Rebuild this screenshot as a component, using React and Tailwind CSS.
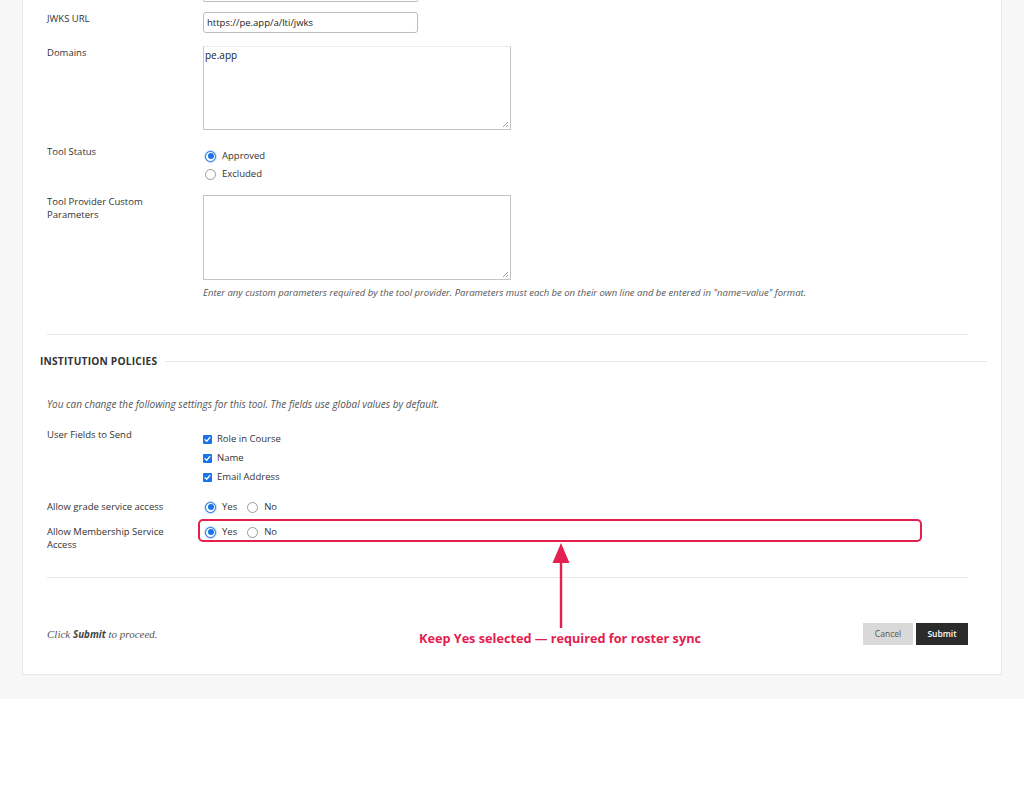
import React from 'react';

const Radio = ({ checked, label }) => (
  <label className="flex items-center gap-[6px] h-[18px]">
    {checked ? (
      <span className="w-[11px] h-[11px] rounded-full border border-[#1a73e8] bg-white flex items-center justify-center shadow-[0_0_0_1px_rgba(26,115,232,0.25)]">
        <span className="w-[6px] h-[6px] rounded-full bg-[#1a73e8]" />
      </span>
    ) : (
      <span className="w-[11px] h-[11px] rounded-full border border-[#999] bg-white" />
    )}
    <span>{label}</span>
  </label>
);

const Check = ({ label }) => (
  <label className="flex items-center gap-[5px] h-[19px]">
    <span className="w-[9px] h-[9px] rounded-[1px] bg-[#1a73e8] flex items-center justify-center">
      <svg width="7" height="7" viewBox="0 0 8 8" fill="none">
        <path d="M1.2 4.2 L3.1 6 L6.8 1.6" stroke="white" strokeWidth="1.5" strokeLinecap="round" strokeLinejoin="round" />
      </svg>
    </span>
    <span>{label}</span>
  </label>
);

const Row = ({ label, children, className = '' }) => (
  <div className={`flex ${className}`}>
    <div className="w-[156px] shrink-0 leading-[13px] pr-4">{label}</div>
    <div className="flex-1">{children}</div>
  </div>
);

const Grip = () => (
  <svg className="absolute right-[1px] bottom-[1px]" width="7" height="7" viewBox="0 0 7 7">
    <path d="M6 1 L1 6 M6 4 L4 6" stroke="#888" strokeWidth="0.8" />
  </svg>
);

export default function App() {
  return (
    <div className="bg-white min-h-[800px] font-['Open_Sans',sans-serif] text-[9.5px] text-[#333]">
      <div className="bg-[#f7f7f7] pl-[22px] pb-[24px]">
        <div className="relative w-[980px] bg-white border border-t-0 border-[#e6e6e6] pl-[24px] pr-[33px]">
          {/* previous field, scrolled out of view */}
          <div className="ml-[156px] w-[215px] h-[2px] border border-t-0 border-[#bdbdbd] rounded-b-[3px]" />

          <Row label="JWKS URL" className="mt-[10px]">
            <div className="w-[215px] h-[21px] border border-[#bdbdbd] rounded-[3px] px-[3px] pt-[1px] flex items-center text-[#222]">
              https://pe.app/a/lti/jwks
            </div>
          </Row>

          <Row label="Domains" className="mt-[13px]">
            <div className="relative w-[308px] h-[84px] border border-[#c4c4c4] border-t-[#ececec] px-[1px] pt-[1px] text-[10px] text-[#222]">
              pe.app
              <Grip />
            </div>
          </Row>

          <Row label="Tool Status" className="mt-[15px]">
            <div className="pt-[2px] pl-[2px]">
              <Radio checked label="Approved" />
              <Radio label="Excluded" />
            </div>
          </Row>

          <Row label="Tool Provider Custom Parameters" className="mt-[12px]">
            <div className="relative w-[308px] h-[85px] border border-[#c4c4c4]">
              <Grip />
            </div>
            <p className="mt-[6px] italic text-[9.5px] leading-[13px] text-[#555]">
              Enter any custom parameters required by the tool provider. Parameters must each be on their own line and be entered in "name=value" format.
            </p>
          </Row>

          <div className="mt-[35px] border-t border-[#e8e8e8]" />

          <div className="-ml-[7px] -mr-[19px] mt-[20px] flex items-center gap-[8px]">
            <h2 className="font-bold text-[10.2px] tracking-[0.2px] text-[#333] leading-[13px]">INSTITUTION POLICIES</h2>
            <div className="flex-1 border-t border-[#e8e8e8]" />
          </div>

          <p className="mt-[30px] italic text-[10px] leading-[13px] text-[#555]">
            You can change the following settings for this tool. The fields use global values by default.
          </p>

          <Row label="User Fields to Send" className="mt-[17px]">
            <div className="pt-[2px]">
              <Check label="Role in Course" />
              <Check label="Name" />
              <Check label="Email Address" />
            </div>
          </Row>

          <Row label="Allow grade service access" className="mt-[13px]">
            <div className="flex gap-[10px] -mt-[2px] pl-[2px]">
              <Radio checked label="Yes" />
              <Radio label="No" />
            </div>
          </Row>

          <Row label="Allow Membership Service Access" className="mt-[9px]">
            <div className="relative flex gap-[10px] -mt-[2px] pl-[2px]">
              <div className="absolute -left-[5px] -top-[4px] w-[724px] h-[23px] border-2 border-[#e3204f] rounded-[5px]" />
              <Radio checked label="Yes" />
              <Radio label="No" />
            </div>
          </Row>

          <div className="mt-[26px] border-t border-[#e8e8e8]" />

          <div className="flex items-center justify-between mt-[45px] mb-[29px]">
            <p className="text-[11px] text-[#555] italic font-['Liberation_Serif',serif]">
              Click <span className="font-['Open_Sans',sans-serif] font-bold text-[#444] text-[9.8px]">Submit</span> to proceed.
            </p>
            <div className="flex gap-[3px]">
              <button className="w-[50px] h-[22px] bg-[#d9d9d9] text-[#555] text-[8.5px]">Cancel</button>
              <button className="w-[52px] h-[22px] bg-[#2b2b2b] text-white font-semibold text-[8.5px]">Submit</button>
            </div>
          </div>

          {/* annotation */}
          <svg className="absolute left-[522px] top-[542px]" width="32" height="88" viewBox="0 0 32 88">
            <polygon points="16,1 7.5,21 24.5,21" fill="#e3204f" />
            <rect x="14.8" y="19" width="2.4" height="67" fill="#e3204f" />
          </svg>
          <div className="absolute left-[337px] top-[630px] w-[400px] text-center font-bold text-[12.7px] leading-[17px] text-[#e3204f]">
            Keep Yes selected — required for roster sync
          </div>
        </div>
      </div>
    </div>
  );
}
